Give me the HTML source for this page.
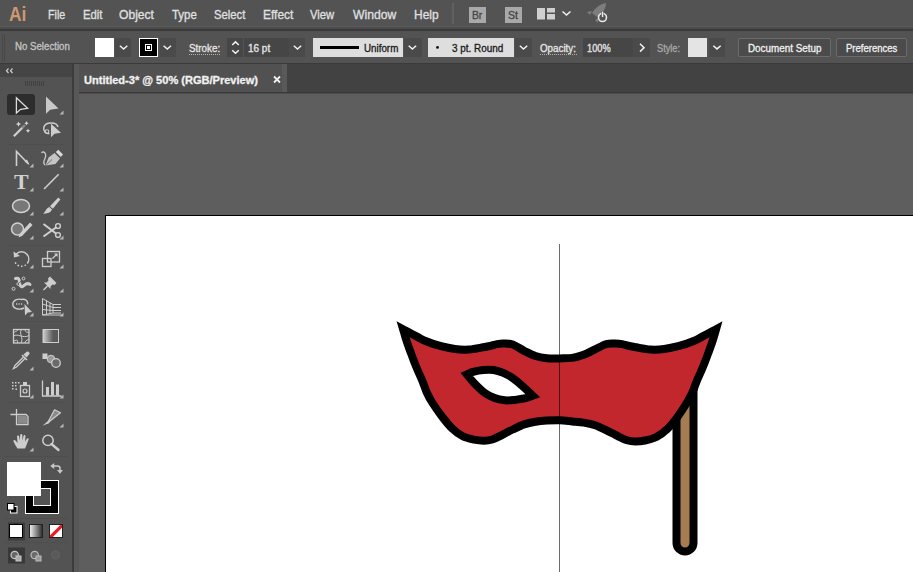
<!DOCTYPE html>
<html><head><meta charset="utf-8"><title>Illustrator</title>
<style>
*{margin:0;padding:0;box-sizing:border-box}
html,body{width:913px;height:572px;overflow:hidden;background:#5e5e5e;font-family:"Liberation Sans",sans-serif;}
#app{position:relative;width:913px;height:572px;overflow:hidden;background:#5e5e5e}
.abs{position:absolute}
#menubar{left:0;top:0;width:913px;height:26px;background:#535353}
#menuline{left:0;top:26px;width:913px;height:5px;background:linear-gradient(#5a5a5a 0,#5a5a5a 1px,#4a4a4a 1px,#4a4a4a 3px,#3a3a3a 3px,#3a3a3a 4.6px,#484848 4.6px)}
#ctrl{left:0;top:31px;width:913px;height:33px;background:#535353}
#ctrlline{left:0;top:63px;width:913px;height:1px;background:#3a3a3a}
#tabbar{left:74px;top:64px;width:839px;height:29px;background:#424242}
#tabline{left:74px;top:92px;width:839px;height:2px;background:linear-gradient(#3a3a3a 0,#3a3a3a 1px,#4c4c4c 1px)}
#tab{left:79px;top:64px;width:208px;height:28px;background:#515151;border-right:5px solid #595959}
#tools{left:0;top:64px;width:73px;height:508px;background:#535353}
#toolhead{left:0;top:64px;width:73px;height:13px;background:#454545}
#toolborder{left:72px;top:64px;width:2px;height:508px;background:#3c3c3c}
#docedge{left:74px;top:64px;width:5px;height:508px;background:#585858}
#artboard{left:105px;top:215px;width:820px;height:400px;background:#fff;border:1px solid #000}
.t{position:absolute;white-space:nowrap;line-height:1;transform-origin:0 0;-webkit-text-stroke:0.3px currentColor}
.box{position:absolute;top:38px;height:19px}
.dd{background:#4a4a4a}
.fld{background:#464646}
.lt{background:#dedede}
.btn{background:#4b4b4b;border:1px solid #6b6b6b;border-radius:2px}
.dot{border-bottom:1px dotted #b0b0b0;position:absolute;height:1px;top:54px}
</style></head><body>
<div id="app">
<div class="abs" id="artboard"></div>
<svg class="abs" style="left:0;top:0" width="913" height="572" viewBox="0 0 913 572">
 <rect x="676.5" y="380" width="17" height="171.5" rx="8.5" fill="#a67c52" stroke="#000" stroke-width="8"/>
 <path d="M403.1 329.2 C404.4 329.9 407.4 331.4 411.1 333.4 C414.8 335.4 420.5 338.9 425.5 341.0 C430.5 343.1 436.1 344.9 441.0 346.2 C445.9 347.5 450.3 348.4 455.0 349.0 C459.7 349.6 464.3 349.8 469.0 349.5 C473.7 349.2 479.5 347.9 483.0 347.3 C486.5 346.7 487.7 346.5 490.0 346.0 C492.3 345.5 494.7 344.5 497.0 344.1 C499.3 343.7 501.0 343.4 503.6 343.5 C506.2 343.6 509.3 343.3 512.7 344.5 C516.1 345.7 520.3 348.9 524.1 350.8 C527.9 352.7 531.7 354.8 535.5 356.0 C539.3 357.2 542.8 357.8 546.8 358.2 C550.8 358.6 555.2 358.4 559.5 358.4 C563.8 358.3 568.4 358.5 572.4 357.9 C576.4 357.3 579.9 356.2 583.7 354.8 C587.5 353.4 591.3 351.1 595.1 349.3 C598.9 347.5 603.1 345.0 606.5 344.0 C609.9 343.0 613.0 343.5 615.6 343.5 C618.2 343.5 619.9 343.7 622.2 344.1 C624.5 344.5 626.9 345.5 629.2 346.0 C631.5 346.5 632.7 346.7 636.2 347.3 C639.7 347.9 645.5 349.2 650.2 349.5 C654.9 349.8 659.5 349.6 664.2 349.0 C668.9 348.4 673.3 347.5 678.2 346.2 C683.1 344.9 688.7 343.1 693.7 341.0 C698.7 338.9 704.4 335.4 708.1 333.4 C711.8 331.4 714.8 329.9 716.1 329.2 C715.6 331.0 714.1 336.4 712.9 340.0 C711.8 343.6 710.5 347.0 709.2 350.5 C707.9 354.0 706.7 357.5 705.3 361.0 C703.9 364.5 702.5 368.0 701.0 371.5 C699.5 375.0 697.8 378.5 696.4 382.0 C695.0 385.5 694.0 389.0 692.4 392.5 C690.8 396.0 689.2 398.9 686.7 403.0 C684.2 407.1 680.5 412.9 677.2 417.3 C674.0 421.7 670.7 425.8 667.2 429.1 C663.7 432.4 660.1 435.1 656.4 437.0 C652.7 438.9 648.6 439.8 645.1 440.5 C641.6 441.2 638.3 441.5 635.3 441.5 C632.3 441.5 629.8 441.2 626.9 440.3 C624.0 439.4 621.2 437.8 617.8 436.1 C614.4 434.4 610.3 432.1 606.5 430.3 C602.7 428.5 598.9 426.5 595.1 425.2 C591.3 423.9 587.5 423.2 583.7 422.6 C579.9 422.0 576.4 421.8 572.4 421.4 C568.4 421.0 564.0 420.3 559.7 420.2 C555.4 420.1 550.8 420.3 546.8 420.6 C542.8 420.9 539.3 421.2 535.5 421.8 C531.7 422.4 527.9 423.1 524.1 424.4 C520.3 425.7 516.5 427.7 512.7 429.5 C508.9 431.3 504.8 433.6 501.4 435.3 C498.0 437.0 495.2 438.6 492.3 439.5 C489.4 440.4 486.9 440.7 483.9 440.7 C480.9 440.7 477.6 440.4 474.1 439.7 C470.6 438.9 466.5 438.1 462.8 436.2 C459.1 434.3 455.5 431.6 452.0 428.3 C448.5 425.0 445.2 420.7 442.0 416.5 C438.8 412.3 435.0 407.0 432.5 403.0 C430.0 399.0 428.4 396.0 426.8 392.5 C425.2 389.0 424.2 385.5 422.8 382.0 C421.4 378.5 419.7 375.0 418.2 371.5 C416.7 368.0 415.3 364.5 413.9 361.0 C412.5 357.5 411.3 354.0 410.0 350.5 C408.7 347.0 407.4 343.6 406.3 340.0 C405.2 336.4 403.6 331.0 403.1 329.2Z M467.0 374.4 C468.0 374.0 470.4 372.6 473.1 371.9 C475.8 371.2 479.8 370.3 483.2 370.0 C486.6 369.7 490.1 369.5 493.5 370.0 C496.9 370.5 500.0 371.5 503.3 372.9 C506.6 374.3 509.9 376.1 513.3 378.5 C516.7 380.9 520.7 384.5 523.9 387.4 C527.1 390.3 531.1 394.3 532.6 395.7 C531.4 396.1 528.4 397.5 525.5 398.2 C522.6 398.9 518.6 399.5 515.1 399.9 C511.7 400.2 508.2 400.6 504.8 400.3 C501.4 400.0 498.0 399.4 494.6 398.1 C491.2 396.8 487.8 395.1 484.4 392.6 C481.0 390.1 477.2 386.2 474.3 383.2 C471.4 380.2 468.2 375.9 467.0 374.4Z" fill="#c1272d" fill-rule="evenodd" stroke="#000" stroke-width="8" stroke-linejoin="miter" stroke-miterlimit="10"/>
 <rect x="559" y="244" width="1" height="330" fill="#000" fill-opacity=".58"/>
</svg>
<div class="abs" id="menubar"></div>
<div class="abs" id="menuline"></div>
<div class="abs" id="ctrl"></div>
<div class="abs" id="ctrlline"></div>
<div class="abs" id="tabbar"></div>
<div class="abs" id="tabline"></div>
<div class="abs" id="tools"></div>
<div class="abs" id="toolhead"></div>
<div class="abs" id="toolborder"></div>
<div class="abs" id="docedge"></div>
<div class="abs" id="tab"></div>

<!-- control bar boxes -->
<div class="box" style="left:95px;width:19px;background:#fff"></div>
<div class="box dd" style="left:115px;width:16px"></div>
<div class="box" style="left:139px;width:19px;background:#000;border:1px solid #fff"></div>
<div class="box dd" style="left:160px;width:16px"></div>
<div class="dot" style="left:189px;width:31px"></div>
<div class="box fld" style="left:227px;width:16px"></div>
<div class="box fld" style="left:244px;width:45px"></div>
<div class="box dd" style="left:289px;width:16px"></div>
<div class="box lt" style="left:313px;width:90px"></div>
<div class="box dd" style="left:404px;width:18px"></div>
<div class="box lt" style="left:428px;width:86px"></div>
<div class="box dd" style="left:515px;width:17px"></div>
<div class="dot" style="left:540px;width:37px"></div>
<div class="box fld" style="left:583px;width:50px"></div>
<div class="box dd" style="left:633px;width:17px"></div>
<div class="box" style="left:688px;width:19px;background:#e4e4e4"></div>
<div class="box dd" style="left:709px;width:16px"></div>
<div class="box btn" style="left:738px;width:93px"></div>
<div class="box btn" style="left:836px;width:71px"></div>
<div class="abs" style="left:469px;top:7px;width:17px;height:16px;background:#a9a9a9"></div>
<div class="abs" style="left:505px;top:7px;width:17px;height:16px;background:#a9a9a9"></div>

<div class="t" id="t0" style="left:47.6px;top:9.42px;font-size:12.5px;font-weight:400;color:#e0e0e0;transform:scaleX(0.8533);">File</div>
<div class="t" id="t1" style="left:82.5px;top:9.42px;font-size:12.5px;font-weight:400;color:#e0e0e0;transform:scaleX(0.9050);">Edit</div>
<div class="t" id="t2" style="left:119.3px;top:9.42px;font-size:12.5px;font-weight:400;color:#e0e0e0;transform:scaleX(0.9684);">Object</div>
<div class="t" id="t3" style="left:171.5px;top:9.42px;font-size:12.5px;font-weight:400;color:#e0e0e0;transform:scaleX(0.9148);">Type</div>
<div class="t" id="t4" style="left:214px;top:9.42px;font-size:12.5px;font-weight:400;color:#e0e0e0;transform:scaleX(0.9007);">Select</div>
<div class="t" id="t5" style="left:263px;top:9.42px;font-size:12.5px;font-weight:400;color:#e0e0e0;transform:scaleX(0.9548);">Effect</div>
<div class="t" id="t6" style="left:310.1px;top:9.42px;font-size:12.5px;font-weight:400;color:#e0e0e0;transform:scaleX(0.9005);">View</div>
<div class="t" id="t7" style="left:353.1px;top:9.42px;font-size:12.5px;font-weight:400;color:#e0e0e0;transform:scaleX(0.9715);">Window</div>
<div class="t" id="t8" style="left:414.3px;top:9.42px;font-size:12.5px;font-weight:400;color:#e0e0e0;transform:scaleX(0.9565);">Help</div>
<div class="t" id="t9" style="left:8.8px;top:2.92px;font-size:21px;font-weight:700;color:#cf9870;transform:scaleX(0.8286);-webkit-text-stroke:0">Ai</div>
<div class="t" id="t10" style="left:15.1px;top:41.73px;font-size:10px;font-weight:400;color:#c4c4c4;transform:scaleX(0.9664);">No Selection</div>
<div class="t" id="t11" style="left:188.8px;top:43.53px;font-size:10px;font-weight:400;color:#e6e6e6;transform:scaleX(0.9846);">Stroke:</div>
<div class="t" id="t12" style="left:248.4px;top:43.53px;font-size:10px;font-weight:400;color:#e6e6e6;transform:scaleX(0.9978);">16 pt</div>
<div class="t" id="t13" style="left:363.7px;top:43.53px;font-size:10px;font-weight:400;color:#1a1a1a;transform:scaleX(0.9796);">Uniform</div>
<div class="t" id="t14" style="left:452.2px;top:43.53px;font-size:10px;font-weight:400;color:#1a1a1a;transform:scaleX(0.9919);">3 pt. Round</div>
<div class="t" id="t15" style="left:540.2px;top:43.53px;font-size:10px;font-weight:400;color:#e6e6e6;transform:scaleX(0.9785);">Opacity:</div>
<div class="t" id="t16" style="left:586.7px;top:43.53px;font-size:10px;font-weight:400;color:#e6e6e6;transform:scaleX(0.9227);">100%</div>
<div class="t" id="t17" style="left:657px;top:43.53px;font-size:10px;font-weight:400;color:#a8a8a8;transform:scaleX(0.9194);">Style:</div>
<div class="t" id="t18" style="left:747.6px;top:43.53px;font-size:10px;font-weight:400;color:#f0f0f0;transform:scaleX(0.9852);">Document Setup</div>
<div class="t" id="t19" style="left:846px;top:43.53px;font-size:10px;font-weight:400;color:#f0f0f0;transform:scaleX(0.9514);">Preferences</div>
<div class="t" id="t20" style="left:83.5px;top:75.53px;font-size:10px;font-weight:700;color:#f0f0f0;transform:scaleX(1.1042);">Untitled-3* @ 50% (RGB/Preview)</div>
<div class="t" id="t21" style="left:13.9px;top:171.55px;font-size:20.5px;font-weight:700;color:#d0d0d0;transform:scaleX(1.0667);font-family:'Liberation Serif',serif;-webkit-text-stroke:0">T</div>
<div class="t" id="t22" style="left:472.3px;top:10.11px;font-size:10.5px;font-weight:400;color:#454545;transform:scaleX(0.9810);">Br</div>
<div class="t" id="t23" style="left:508.3px;top:10.11px;font-size:10.5px;font-weight:400;color:#454545;transform:scaleX(1.0079);">St</div>

<svg class="abs" style="left:0;top:0" width="913" height="572" viewBox="0 0 913 572" fill="none">
<!-- menu bar icons -->
<rect x="452" y="3" width="2" height="21" fill="#606060"/>
<g fill="#cfcfcf"><rect x="537" y="8" width="8" height="11.5"/><rect x="547" y="8" width="8" height="4.5"/><rect x="547" y="14" width="8" height="5.5"/></g>
<path d="M562.5 11.5 L566.5 15 L570.5 11.5" stroke="#f0f0f0" stroke-width="1.6"/>
<g fill="#7d7d7d"><path d="M606 3 C600 4 595 8 592 13 L597 17 C602 14 606 9 606 3Z"/><path d="M592 11 L587 12 L590 15Z"/><path d="M598 18 L598 23 L595 20Z"/></g>
<circle cx="602.5" cy="17.5" r="4" stroke="#e8e8e8" stroke-width="1.6" fill="#535353"/>
<rect x="601.3" y="11" width="2.4" height="6.5" fill="#535353"/>
<rect x="601.8" y="11.5" width="1.5" height="5.5" fill="#e8e8e8"/>
<!-- control bar grip -->
<g fill="#484848"><rect x="2" y="34" width="1" height="28"/><rect x="4" y="34" width="1" height="28"/></g>
<!-- chevrons in dropdowns -->
<g stroke="#f2f2f2" stroke-width="1.5">
<path d="M119.9 45.7 L123.6 49 L127.3 45.7"/>
<path d="M163.6 45.7 L167.3 49 L171 45.7"/>
<path d="M293.8 45.7 L297.5 49 L301.2 45.7"/>
<path d="M408.7 45.7 L412.4 49 L416.1 45.7"/>
<path d="M519.8 45.7 L523.5 49 L527.2 45.7"/>
<path d="M713.3 45.7 L717 48.9 L720.7 45.7"/>
<path d="M232.2 45 L235.5 41.900 L238.8 45"/>
<path d="M232.2 50.2 L235.5 53.3 L238.8 50.2"/>
<path d="M640 43.8 L644 47.700 L640 51.600"/>
</g>
<rect x="145.5" y="44.500" width="6" height="6" stroke="#fff" stroke-width="1"/>
<rect x="147" y="46" width="3" height="3" fill="#fff"/>
<rect x="320" y="46" width="39" height="3" fill="#000"/>
<circle cx="437.500" cy="47.400" r="1.400" fill="#111"/>
<!-- tab close -->
<path d="M274 76.5 L280 82.5 M280 76.5 L274 82.5" stroke="#f0f0f0" stroke-width="1.8"/>
<!-- tools header -->
<path d="M8.5 68.5 L6.5 70.700 L8.5 73 M12.5 68.5 L10.500 70.700 L12.5 73" stroke="#d0d0d0" stroke-width="1.2"/>
<g fill="#414141"><rect x="25" y="81" width="1" height="5"/><rect x="27" y="81" width="1" height="5"/><rect x="29" y="81" width="1" height="5"/><rect x="31" y="81" width="1" height="5"/><rect x="33" y="81" width="1" height="5"/><rect x="35" y="81" width="1" height="5"/><rect x="37" y="81" width="1" height="5"/><rect x="39" y="81" width="1" height="5"/><rect x="41" y="81" width="1" height="5"/><rect x="43" y="81" width="1" height="5"/></g>
<!-- selected tool bg -->
<rect x="7" y="94" width="28" height="21" rx="3" fill="#2d2d2d"/>
<!-- separators -->
<g fill="#4e4e4e"><rect x="8" y="144" width="56" height="1"/><rect x="8" y="245" width="56" height="1"/><rect x="8" y="321" width="56" height="1"/><rect x="8" y="402" width="56" height="1"/><rect x="4" y="456" width="64" height="1"/><rect x="4" y="518" width="64" height="1"/><rect x="4" y="542" width="64" height="1"/></g>
<!-- flyout triangles -->
<g fill="#b8b8b8">
<path d="M63.5 110.5v4h-4z"/>
<path d="M33.5 163.5v4h-4z"/><path d="M63.5 163.5v4h-4z"/>
<path d="M33.5 187.5v4h-4z"/><path d="M63.5 187.5v4h-4z"/>
<path d="M33.5 211.5v4h-4z"/><path d="M63.5 211.5v4h-4z"/>
<path d="M33.5 235.5v4h-4z"/><path d="M63.5 235.5v4h-4z"/>
<path d="M33.5 264.5v4h-4z"/><path d="M63.5 264.5v4h-4z"/>
<path d="M33.5 288.5v4h-4z"/><path d="M63.5 288.5v4h-4z"/>
<path d="M33.5 312.5v4h-4z"/><path d="M63.5 312.5v4h-4z"/>
<path d="M33.5 366.5v4h-4z"/>
<path d="M33.5 394.5v4h-4z"/><path d="M63.5 394.5v4h-4z"/>
<path d="M63.5 423.5v4h-4z"/>
<path d="M33.5 447.5v4h-4z"/>
</g>
<!-- row1 -->
<path d="M16.400 97.800 L16.400 113 L20.600 109.300 L27.600 108.300 Z" stroke="#dcdcdc" stroke-width="1.300" stroke-linejoin="miter"/>
<path d="M46 96.600 L46 113.800 L50.200 109.700 L58.500 108.400 Z" fill="#c9c9c9"/>
<!-- row2 magic wand -->
<path d="M13.8 136.2 L23.5 126.5" stroke="#cfcfcf" stroke-width="2.2"/>
<path d="M22 128 L25 125" stroke="#8a8a8a" stroke-width="2.4"/>
<g fill="#d6d6d6"><path d="M18.5 121.5l.8 1.8 1.8.8-1.8.8-.8 1.8-.8-1.800-1.800-.8 1.800-.8z"/><path d="M26.500 121l.7 1.500 1.500.7-1.500.7-.7 1.500-.7-1.500-1.500-.7 1.500-.7z"/><path d="M28 128.500l.7 1.500 1.500.7-1.500.7-.7 1.500-.7-1.500-1.500-.7 1.500-.7z"/></g>
<!-- lasso-ish -->
<path d="M58 127 C57 121.500 45 121.500 43.800 127.500 C43 131.500 46 134 49.500 133.500" stroke="#cdcdcd" stroke-width="1.500"/>
<circle cx="47" cy="131.500" r="1.800" stroke="#cdcdcd" stroke-width="1.100"/>
<path d="M51 123.800 L51 137.200 L54.500 133.800 L61 132.800 Z" fill="#cdcdcd"/>
<!-- row3 anchor point tool -->
<path d="M16.500 166 L16.500 151.500 L28.500 164" stroke="#cfcfcf" stroke-width="1.600" stroke-linejoin="miter"/>
<path d="M24.500 161.500 L29.500 165 L27 159.500Z" fill="#cfcfcf"/>
<!-- curvature pen -->
<path d="M45 165 C41 161 47.500 158 45.500 154 C44.500 151.500 42.500 151.500 41.500 153" stroke="#cdcdcd" stroke-width="1.300"/>
<path d="M45.500 165.500 L48.500 157.500 L54.500 153 L60 158.500 L55.500 164 Z" fill="#c4c4c4"/>
<path d="M55.800 152 L58.300 149.800 L63 154.500 L60.800 157Z" fill="#dadada"/>
<path d="M46.500 164.700 L52 159.500" stroke="#6a6a6a" stroke-width="1"/>
<!-- row4 line -->
<path d="M44 189 L58.700 174.200" stroke="#cdcdcd" stroke-width="1.600"/>
<!-- row5 ellipse, brush -->
<ellipse cx="21" cy="206" rx="8.500" ry="6.500" fill="#787878" stroke="#d2d2d2" stroke-width="1.500"/>
<path d="M58.300 197.600 L60.400 199.600 L52.800 208.800 L50 206.200 Z" fill="#cfcfcf"/>
<path d="M49.300 207 L52 209.600 C50.500 213 46.500 214 43 213.600 C45.500 212.400 45.500 208.600 49.300 207Z" fill="#cfcfcf"/>
<!-- row6 shaper, scissors -->
<circle cx="17.500" cy="229" r="6" fill="#787878" stroke="#d0d0d0" stroke-width="1.500"/>
<path d="M30 222.500 L32.500 225 L22 236 L18.500 237.500 L19.800 233.800 Z" fill="#d0d0d0"/>
<circle cx="58" cy="226" r="2.400" stroke="#d0d0d0" stroke-width="1.400"/>
<circle cx="58" cy="235" r="2.400" stroke="#d0d0d0" stroke-width="1.400"/>
<path d="M56 227.500 L43.500 236.500 M56 233.500 L43.500 224" stroke="#d0d0d0" stroke-width="2"/>
<!-- row7 rotate, scale -->
<path d="M16 254.500 A7.200 7.200 0 1 1 15 262" stroke="#cdcdcd" stroke-width="1.500" stroke-dasharray="22 2 1.600 2 1.600 2 1.600 2 1.600 2 1.600 2 50"/>
<path d="M13.500 251.500 L14 257.500 L20 256 Z" fill="#cdcdcd"/>
<rect x="47.500" y="251.500" width="12" height="10.500" stroke="#cdcdcd" stroke-width="1.300"/>
<rect x="42.500" y="258.500" width="8.500" height="8" stroke="#cdcdcd" stroke-width="1.300"/>
<path d="M52.500 258.500 L57 254" stroke="#cdcdcd" stroke-width="1.300"/>
<path d="M54 253.500 L57.500 253.500 L57.500 257Z" fill="#cdcdcd"/>
<!-- row8 width, pin -->
<path d="M15.500 278.500 C21 277 18.500 283 20.500 286 C23 289.500 25.500 280.500 30 284.500" stroke="#cdcdcd" stroke-width="3" stroke-linecap="round"/><path d="M14 288.500 L24 278" stroke="#535353" stroke-width="1"/>
<circle cx="13.500" cy="288.800" r="1.500" stroke="#cdcdcd" stroke-width="1" fill="#535353"/><circle cx="23.500" cy="278.500" r="1.400" stroke="#cdcdcd" stroke-width="1" fill="#535353"/><circle cx="18.300" cy="284" r="1.400" stroke="#cdcdcd" stroke-width="1" fill="#535353"/>
<path d="M50 276.500 L56.500 283 L54.500 285 L52.500 284.500 L50.500 286.500 L50.500 289 L44 282.500 L46.500 282.500 L48.500 280.500 L48 278.500Z" fill="#cdcdcd"/>
<path d="M47.500 286 L43.500 290" stroke="#cdcdcd" stroke-width="1.500"/>
<!-- row9 shape builder, perspective -->
<path d="M24 308 C19 310.500 12.500 308.500 12.800 304 C13 300 18 298.500 21.500 299.500 C25 298.500 28.500 301 27.500 304.500" stroke="#cdcdcd" stroke-width="1.400"/>
<path d="M16 304h1.200m1.300 0h1.200m1.300 0h1.200" stroke="#cdcdcd" stroke-width="1.300"/>
<path d="M24.500 304 L25 315.500 L27.800 312.500 L32 312 Z" fill="#cdcdcd"/>
<path d="M42.500 298.500 V315 H61.500 M42.500 298.500 L53 304.500 V313 L42.500 315 M46.500 300.800 V314.200 M50 302.800 V313.500 M42.500 304 L53 307.500 M42.500 309.500 L53 310.500 M53 304.500 H61 M53 307.500 H61 M53 310.500 H61 M53 313 H61" stroke="#cdcdcd" stroke-width="1"/>
<!-- row10 mesh, gradient -->
<rect x="13.500" y="329.500" width="15.500" height="13.500" stroke="#cdcdcd" stroke-width="1.300"/>
<path d="M13.500 336 C18 333 23 339 29 335.500 M21.500 329.500 C18.500 334 24 338 21 343 M13.500 332.500 C17 331 18 330.500 18 329.500 M29 339.500 C26 340 25 341.500 25 343 M14 341 C17 340 18 339 17.500 343 M25 329.500 C25 332 27 332.500 29 332" stroke="#cdcdcd" stroke-width="1"/>
<defs><linearGradient id="gr" x1="0" y1="0" x2="1" y2="0"><stop offset="0" stop-color="#cfcfcf"/><stop offset=".65" stop-color="#5a5a5a"/><stop offset="1" stop-color="#585858"/></linearGradient>
<linearGradient id="gr2" x1="0" y1="0" x2="1" y2="0"><stop offset="0" stop-color="#f4f4f4"/><stop offset="1" stop-color="#2a2a2a"/></linearGradient></defs>
<rect x="43" y="329.500" width="15.500" height="13" fill="url(#gr)" stroke="#cdcdcd" stroke-width="1"/>
<!-- row11 eyedropper, blend -->
<path d="M27 351.500 C28.500 351 30 352.500 29.500 354 L26.500 357.500 L23.500 354.500 Z" fill="#cdcdcd"/>
<path d="M22 355 L27 360" stroke="#cdcdcd" stroke-width="1.600"/>
<path d="M23.500 357 L15 365.500 L13.500 368.500 L16.500 367 L25 358.500" stroke="#cdcdcd" stroke-width="1.300"/>
<rect x="42.500" y="353.500" width="5" height="5.500" fill="#cdcdcd"/>
<circle cx="51" cy="359" r="3.800" fill="#9a9a9a" stroke="#cdcdcd" stroke-width="1"/>
<circle cx="56" cy="363" r="4.300" fill="#6a6a6a" stroke="#cdcdcd" stroke-width="1.300"/>
<!-- row12 sprayer, graph -->
<rect x="20.500" y="385.500" width="9" height="11" stroke="#cdcdcd" stroke-width="1.300"/>
<rect x="23" y="382" width="4" height="3" fill="#cdcdcd"/>
<circle cx="25" cy="391" r="2" stroke="#cdcdcd" stroke-width="1.200"/>
<g fill="#cdcdcd"><rect x="12" y="382" width="1.500" height="1.500"/><rect x="15" y="382" width="1.500" height="1.500"/><rect x="18" y="382" width="1.500" height="1.500"/><rect x="12" y="385" width="1.500" height="1.500"/><rect x="15" y="385" width="1.500" height="1.500"/><rect x="12" y="388" width="1.500" height="1.500"/><rect x="15.500" y="388.500" width="1.500" height="1.500"/></g>
<path d="M42.500 380.500 V396 H61.500" stroke="#cdcdcd" stroke-width="1.300"/>
<g fill="#cdcdcd"><rect x="46" y="387" width="3" height="8.500"/><rect x="51" y="382" width="3" height="13.500"/><rect x="56" y="384.500" width="3" height="11"/></g>
<!-- row13 artboard, slice -->
<path d="M16.500 409 V424.500 H28 V416.500 L26 414.500 H10.500" stroke="#cdcdcd" stroke-width="1.300"/>
<path d="M17.500 415.500 H25.500 L27 417 V423.500 H17.500Z" fill="#8a8a8a"/>
<path d="M54.500 409.800 L60.500 412.800 L47.500 423 Z" stroke="#cdcdcd" stroke-width="1.200" fill="#8a8a8a" stroke-linejoin="round"/>
<path d="M48.500 420.500 L42.500 425.800 L49.500 423Z" fill="#cdcdcd"/>
<!-- row14 hand, zoom -->
<path d="M17.500 448.500 C15.500 445.500 14.500 443.500 13.500 441.500 C13 440 14.500 439.500 15.500 440.500 L17.500 443 L17 436.500 C17 435 19 435 19.200 436.500 L19.800 440.500 L20.200 435 C20.300 433.500 22.300 433.500 22.300 435 L22.500 440.500 L23.500 435.800 C23.800 434.500 25.600 434.800 25.500 436.200 L25 441.500 L26.800 438.800 C27.600 437.600 29.200 438.500 28.600 439.800 C27.500 442.500 26.500 445.500 25 448.500 Z" fill="#cdcdcd"/>
<circle cx="48" cy="440.400" r="5.200" stroke="#cdcdcd" stroke-width="1.500"/>
<path d="M51.500 444 L58.500 450" stroke="#cdcdcd" stroke-width="2.400" stroke-linecap="round"/>
<!-- fill / stroke -->
<rect x="25.500" y="480.500" width="33" height="33" fill="#000" stroke="#fff" stroke-width="1"/>
<rect x="33.500" y="488.500" width="17" height="17" fill="#535353" stroke="#fff" stroke-width="1"/>
<rect x="7" y="462" width="34" height="34" fill="#fff"/>
<path d="M53.500 466 H57.500 Q60 466 60 468.500 V470.500" stroke="#c8c8c8" stroke-width="1.500"/>
<path d="M50.300 466 L54.200 463 V469Z M57 470 H63 L60 473.800Z" fill="#c8c8c8"/>
<rect x="10.500" y="506.500" width="6.500" height="6.500" fill="#000" stroke="#fff" stroke-width="1"/>
<rect x="7.500" y="503.500" width="6.500" height="6.500" fill="#fff" stroke="#000" stroke-width="1"/>
<!-- color mode buttons -->
<rect x="8" y="522.500" width="17" height="18" fill="#3c3c3c"/>
<rect x="9.500" y="524.500" width="13" height="13" fill="#fff" stroke="#000" stroke-width="1"/>
<rect x="29.500" y="524.500" width="13" height="13" fill="url(#gr2)" stroke="#222" stroke-width="1"/>
<rect x="49.500" y="524.500" width="13" height="13" fill="#fff" stroke="#222" stroke-width="1"/>
<clipPath id="cpn"><rect x="50" y="525" width="12" height="12"/></clipPath><path d="M50.300 537.300 L62.300 525.300" stroke="#ec1c24" stroke-width="3.200" clip-path="url(#cpn)"/>
<!-- draw modes -->
<rect x="8" y="547.500" width="17" height="16" fill="#383838"/>
<circle cx="14.700" cy="555" r="3.700" stroke="#c8c8c8" stroke-width="1.200" fill="#666"/>
<rect x="16" y="556" width="5" height="5" fill="#aaa" stroke="#c8c8c8" stroke-width="1"/>
<circle cx="34.700" cy="555" r="3.700" stroke="#bcbcbc" stroke-width="1.200" fill="#6a6a6a"/>
<rect x="36" y="556" width="5" height="5" fill="#999" stroke="#bcbcbc" stroke-width="1"/>
<circle cx="55.500" cy="555" r="4" stroke="#626262" stroke-width="1.200" fill="#5a5a5a"/>

</svg>
</div>
</body></html>
